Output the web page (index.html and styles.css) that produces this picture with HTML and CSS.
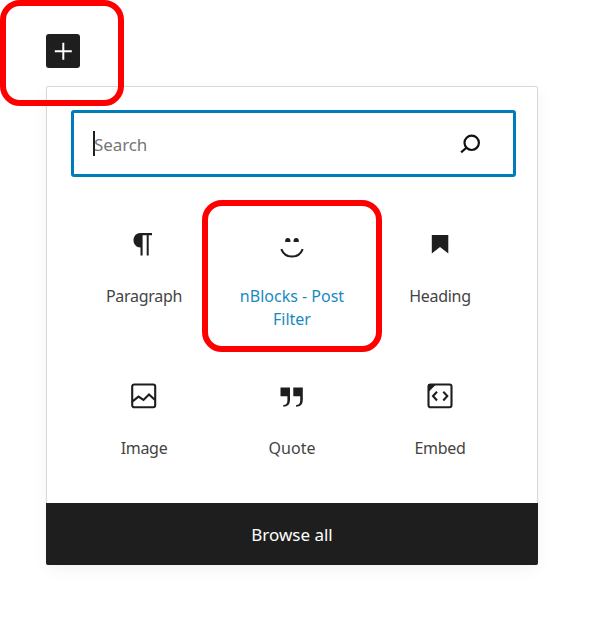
FILE: index.html
```html
<!DOCTYPE html>
<html lang="en">
<head>
<meta charset="utf-8">
<title>Block inserter</title>
<link rel="stylesheet" href="styles.css">
</head>
<body>
<button class="toggle" aria-label="Add block"><svg width="34" height="34" viewBox="0 0 34 34"><path d="M17.300 8.700v17M8.800 17.200h17" stroke="#fff" stroke-width="2"/></svg></button>
<main class="inserter">
  <div class="content">
    <div class="search">
      <span class="caret"></span><span class="placeholder">Search</span>
      <svg class="search-icon" width="24" height="24" viewBox="0 0 24 24" fill="none" stroke="#111" stroke-width="2.2"><circle cx="13.700" cy="10.800" r="7.200"/><path d="M8.700 15.500l-5.600 4.800"/></svg>
    </div>
    <div class="blocks">
      <div class="block">
        <svg class="icon" viewBox="0 0 32 32"><path d="M12.500 5H24v2.200h-3.300v20.200h-2V7.200h-4.100v20.200h-2.100V19.400C8.300 19.400 5.500 16.200 5.500 12.200S8.300 5 12.500 5z"/></svg>
        <span class="label tight">Paragraph</span>
      </div>
      <div class="block">
        <svg class="icon" viewBox="0 0 32 32"><path d="M9.200 14q-.4-4 2.600-4t2.600 4zM17.600 14q-.4-4 2.600-4t2.600 4z"/><path class="line" d="M5.300 21.200C9 31 23 31 26.700 21.200"/></svg>
        <span class="label active">nBlocks - Post<br>Filter</span>
      </div>
      <div class="block">
        <svg class="icon" viewBox="0 0 32 32"><path d="M7.800 7h16.500v18.600L16 19l-8.200 6.600z"/></svg>
        <span class="label tight">Heading</span>
      </div>
      <div class="block">
        <svg class="icon" viewBox="0 0 32 32"><rect class="line" x="4.200" y="4.500" width="23" height="22.800" rx="2"/><path class="line" d="M4.500 21.300l6-4.700 5 3.300 5.500-5.400 6 5.500"/></svg>
        <span class="label tight">Image</span>
      </div>
      <div class="block">
        <svg class="icon" viewBox="0 0 32 32"><path d="M4.500 7.600H14v12.500q0 6.700-6.700 6.700V25q4.100 0 4.100-4.500v-4.300H4.500zM17.300 7.600h9.500v12.500q0 6.700-6.700 6.700V25q4.100 0 4.100-4.500v-4.300h-6.900z"/></svg>
        <span class="label">Quote</span>
      </div>
      <div class="block">
        <svg class="icon" viewBox="0 0 32 32"><rect class="line" x="4.500" y="4.500" width="23" height="22.800" rx="2"/><path d="M4 4h8.500L4 12.500z"/><path class="line" d="M13 11.700l-4 4.300 4 4.500M19.300 11.700l4 4.300-4 4.500"/></svg>
        <span class="label tight">Embed</span>
      </div>
    </div>
  </div>
  <button class="browse">Browse all</button>
</main>
<div class="mark mark-toggle"></div>
<div class="mark mark-block"></div>
</body>
</html>
```
FILE: styles.css
```css
* { box-sizing: border-box; }
body {
  margin: 0;
  padding: 34px 0 0 46px;
  height: 622px;
  background: #fff;
  font-family: "Noto Sans", sans-serif;
  position: relative;
  overflow: hidden;
}
button { border: 0; padding: 0; font: inherit; }
svg { display: block; }
.toggle {
  display: block;
  width: 34px;
  height: 34px;
  border-radius: 3px;
  background: #1e1e1e;
}
.inserter {
  margin-top: 18px;
  width: 492px;
  height: 478.500px;
  display: flex;
  flex-direction: column;
  border: 1px solid #d8d8d8;
  border-radius: 2px;
  box-shadow: 0 4px 16px rgba(0, 0, 0, .05);
}
.content { flex: 1; min-height: 0; padding: 23px 21px 0 24px; }
.search {
  width: 445px;
  height: 67px;
  padding: 0 31px 0 19px;
  border: 3px solid #007cba;
  border-radius: 3px;
  display: flex;
  align-items: center;
}
.caret { width: 1.5px; height: 25px; margin-top: -1px; background: #1e1e1e; }
.placeholder {
  flex: 1;
  margin: 2px 0 0 -.5px;
  color: #777;
  font-size: 17px;
  line-height: 24px;
  letter-spacing: -.1px;
}
.blocks {
  display: grid;
  grid-template-columns: repeat(3, 148px);
  grid-auto-rows: 152px;
  margin: 51px 0 0 -1px;
}
.block { display: flex; flex-direction: column; align-items: center; }
.icon { width: 32px; height: 32px; fill: #1e1e1e; }
.line { fill: none; stroke: #1e1e1e; stroke-width: 2.1; }
.label {
  margin-top: 25px;
  color: #444;
  font-size: 16px;
  line-height: 22.5px;
  text-align: center;
  white-space: nowrap;
}
.tight { letter-spacing: -.3px; }
.active { color: #198abf; }
.browse {
  flex: none;
  height: 62px;
  margin: 0 -1px -1px;
  border-radius: 0 0 2px 2px;
  background: #1e1e1e;
  color: #fff;
  font-size: 17px;
  padding-top: 2px;
}
.mark {
  position: absolute;
  border: 6px solid #f00;
  pointer-events: none;
}
.mark-toggle { left: 0; top: 0; width: 124px; height: 106px; border-radius: 20px; }
.mark-block { left: 202px; top: 200px; width: 180px; height: 152px; border-radius: 20px; }
```
